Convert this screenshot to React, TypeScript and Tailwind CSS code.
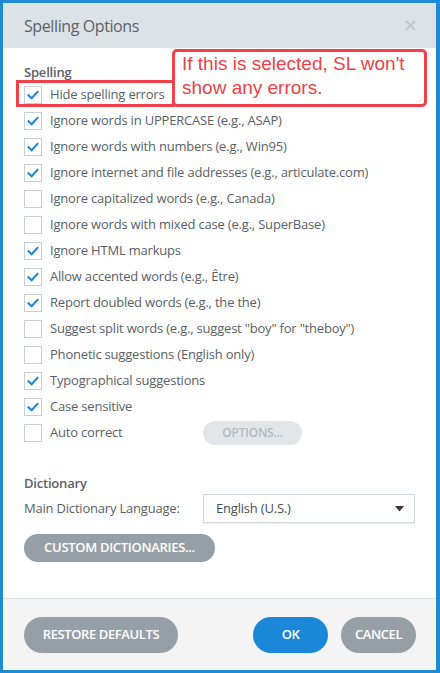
import React from "react";

const rows: { label: string; checked: boolean }[] = [
  { label: "Hide spelling errors", checked: true },
  { label: "Ignore words in UPPERCASE (e.g., ASAP)", checked: true },
  { label: "Ignore words with numbers (e.g., Win95)", checked: true },
  { label: "Ignore internet and file addresses (e.g., articulate.com)", checked: true },
  { label: "Ignore capitalized words (e.g., Canada)", checked: false },
  { label: "Ignore words with mixed case (e.g., SuperBase)", checked: false },
  { label: "Ignore HTML markups", checked: true },
  { label: "Allow accented words (e.g., Être)", checked: true },
  { label: "Report doubled words (e.g., the the)", checked: true },
  { label: 'Suggest split words (e.g., suggest "boy" for "theboy")', checked: false },
  { label: "Phonetic suggestions (English only)", checked: false },
  { label: "Typographical suggestions", checked: true },
  { label: "Case sensitive", checked: true },
];

function Checkbox({ checked }: { checked: boolean }) {
  return (
    <span className="flex h-[18px] w-[18px] shrink-0 items-center justify-center border border-[#c8cfd6] bg-white">
      {checked && (
        <svg width="14" height="14" viewBox="0 0 14 14" fill="none">
          <path d="M2.5 7.2 L5.6 10.2 L11.5 3.8" stroke="#1a86d6" strokeWidth="2" strokeLinecap="square" />
        </svg>
      )}
    </span>
  );
}

function Row({ label, checked, children }: { label: string; checked: boolean; children?: React.ReactNode }) {
  return (
    <div className="flex h-[26px] items-center">
      <Checkbox checked={checked} />
      <span className="ml-[8px] whitespace-nowrap">{label}</span>
      {children}
    </div>
  );
}

export default function App() {
  return (
    <div
      className="relative flex h-[673px] w-[440px] flex-col border-[3px] border-r-4 border-[#1f8ad4] bg-white text-[13px] tracking-[-0.2px] text-[#595f66]"
      style={{ fontFamily: '"Open Sans", "Noto Sans", sans-serif' }}
    >
      {/* title bar */}
      <div className="flex h-[45px] shrink-0 items-center justify-between bg-[#dde2e7] pl-[21px] pr-[20px]">
        <span className="text-[16px] tracking-[-0.4px] text-[#5b6168]">Spelling Options</span>
        <svg width="11" height="11" viewBox="0 0 11 11">
          <path d="M1 1 L10 10 M10 1 L1 10" stroke="#c4c7ca" strokeWidth="2" />
        </svg>
      </div>

      {/* body */}
      <div className="flex-1 px-[21px] pt-[14px]">
        <div className="h-[20px] font-semibold leading-[20px]">Spelling</div>
        {rows.map((r) => (
          <Row key={r.label} label={r.label} checked={r.checked} />
        ))}
        <Row label="Auto correct" checked={false}>
          <button className="ml-auto mr-[113px] h-[24px] w-[99px] rounded-full bg-[#e3e6e9] text-[12px] font-semibold text-[#b3b8bd]">
            OPTIONS...
          </button>
        </Row>

        <div className="mt-[27px] h-[20px] font-semibold leading-[20px]">Dictionary</div>
        <div className="mt-[1px] flex h-[29px] items-center">
          <span className="w-[179px]">Main Dictionary Language:</span>
          <div className="flex h-[29px] w-[212px] items-center justify-between border border-[#d3d8dd] bg-white pl-[12px] pr-[10px] text-[#4a4f55] shadow-[0_1px_1px_rgba(0,0,0,0.06)]">
            <span>English (U.S.)</span>
            <svg width="9" height="6" viewBox="0 0 9 6">
              <path d="M0 0 H9 L4.5 5.5 Z" fill="#3a3a3a" />
            </svg>
          </div>
        </div>
        <button className="mt-[11px] h-[28px] w-[191px] rounded-full bg-[#979fa6] text-[13px] font-semibold tracking-[-0.3px] text-white">
          CUSTOM DICTIONARIES...
        </button>
      </div>

      {/* footer */}
      <div className="flex h-[72px] shrink-0 items-center border-t border-[#dde2e7] bg-[#f4f4f4] pl-[21px] pr-[20px] tracking-[-0.4px]">
        <button className="h-[36px] w-[154px] rounded-full bg-[#979fa6] text-[13px] font-semibold text-white">
          RESTORE DEFAULTS
        </button>
        <button className="ml-auto h-[36px] w-[75px] rounded-full bg-[#1a87d8] text-[13px] font-semibold text-white">
          OK
        </button>
        <button className="ml-[13px] h-[36px] w-[75px] rounded-full bg-[#979fa6] text-[13px] font-semibold text-white">
          CANCEL
        </button>
      </div>

      {/* annotation overlay */}
      <div className="pointer-events-none absolute left-[13px] top-[77px] h-[27px] w-[159px] border-[3px] border-[#f2414a]" />
      <div
        className="pointer-events-none absolute left-[169px] top-[46px] h-[58px] w-[255px] rounded-[5px] border-[3px] border-[#f2414a] bg-white pl-[7px] text-[19px] leading-[24px] tracking-normal text-[#ef3f48]"
        style={{ fontFamily: '"Liberation Sans", Arial, sans-serif' }}
      >
        If this is selected, SL won't
        <br />
        show any errors.
      </div>
    </div>
  );
}
